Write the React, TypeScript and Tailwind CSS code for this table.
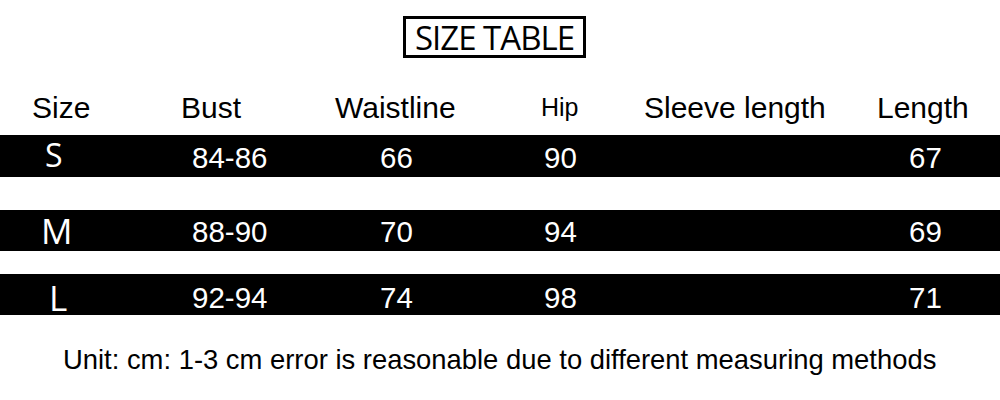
import React from "react";

const rows = [
  { size: "S", sizeCls: "pl-[45px] pt-[4px] text-[32px]", bust: "84-86", waist: "66", hip: "90", len: "67", h: "h-[42px]", mt: "mt-[12px]", pt: "pt-[8px]" },
  { size: "M", sizeCls: "pl-[41px] pt-[3px] text-[35px]", bust: "88-90", waist: "70", hip: "94", len: "69", h: "h-[41px]", mt: "mt-[33px]", pt: "pt-[7px]" },
  { size: "L", sizeCls: "pl-[49px] pt-[6px] text-[35px]", bust: "92-94", waist: "74", hip: "98", len: "71", h: "h-[41px]", mt: "mt-[23px]", pt: "pt-[9px]" },
];

const grid = "grid grid-cols-[170px_150px_210px_110px_220px_140px]";

export default function App() {
  return (
    <div className="w-[1000px] h-[400px] bg-white flex flex-col font-['Liberation_Sans',Arial,sans-serif] text-black">
      {/* Title */}
      <div className="pt-[16px] flex">
        <div className="ml-[403px] w-[183px] h-[42px] border-[3px] border-black flex items-center justify-center">
          <span className="font-['Open_Sans',sans-serif] text-[33px] leading-none tracking-[-1px]">SIZE TABLE</span>
        </div>
      </div>

      {/* Header */}
      <div className={`${grid} mt-[35px] h-[30px] items-start text-[30px] leading-none`}>
        <div className="pl-[32px]">Size</div>
        <div className="pl-[11px]">Bust</div>
        <div className="pl-[15px]">Waistline</div>
        <div className="pl-[11px] pt-[2px] text-[25px]">Hip</div>
        <div className="pl-[4px]">Sleeve length</div>
        <div className="pl-[17px]">Length</div>
      </div>

      {/* Rows */}
      {rows.map((r) => (
        <div key={r.size} className={`${grid} ${r.h} ${r.mt} bg-black text-white items-start text-[29.5px] leading-none`}>
          <div className={`font-['Open_Sans',sans-serif] ${r.sizeCls}`}>{r.size}</div>
          <div className={`pl-[22px] ${r.pt}`}>{r.bust}</div>
          <div className={`pl-[60px] ${r.pt}`}>{r.waist}</div>
          <div className={`pl-[14px] ${r.pt}`}>{r.hip}</div>
          <div />
          <div className={`pl-[49px] ${r.pt}`}>{r.len}</div>
        </div>
      ))}

      {/* Footer */}
      <div className="mt-[31px] pl-[63px] text-[27.4px] leading-none whitespace-nowrap">
        Unit: cm: 1-3 cm error is reasonable due to different measuring methods
      </div>
    </div>
  );
}
